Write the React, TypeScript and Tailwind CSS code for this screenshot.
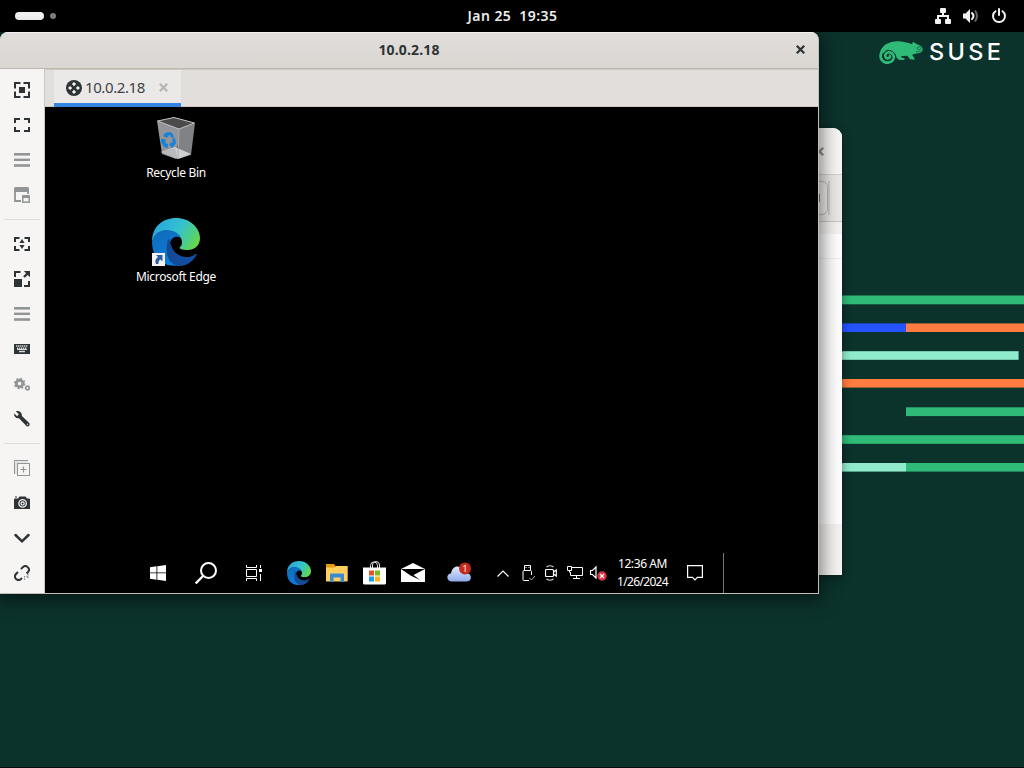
import type { ReactNode } from 'react';

const DARK = '#2e3436';
const GREY = '#929595';

function Icon({ children, c = DARK }: { children: ReactNode; c?: string }) {
  return (
    <div className="flex h-[35px] items-start justify-center pt-[10px]">
      <svg width="16" height="16" viewBox="0 0 16 16" fill="none" stroke={c} strokeWidth="2">
        {children}
      </svg>
    </div>
  );
}

function Divider() {
  return (
    <div className="flex h-[14px] items-center px-1">
      <div className="h-px w-full bg-[#dcdad8]" />
    </div>
  );
}

function Bars() {
  return (
    <g fill={GREY} stroke="none">
      <rect y="1" width="16" height="2.6" />
      <rect y="6.6" width="16" height="2.4" />
      <rect y="12.2" width="16" height="2.6" />
    </g>
  );
}

function Sidebar() {
  return (
    <aside className="flex w-[45px] flex-col border-r border-[#cdc7c2] bg-[#f6f5f4] pt-[3px]">
      <Icon>
        <path d="M1 6.5V1h5.5M9.5 1H15v5.5M15 9.5V15H9.5M6.5 15H1V9.5" />
        <rect x="5" y="5" width="6" height="6" fill={DARK} stroke="none" />
      </Icon>
      <Icon>
        <path d="M1 6V2h5M10 2h5v4M15 10v4h-5M6 14H1v-4" />
      </Icon>
      <Icon><Bars /></Icon>
      <Icon c={GREY}>
        <path d="M1 5v9h6M14 5v2" strokeWidth="1.8" />
        <path d="M0 1.5Q0 0 1.5 0h12Q15 0 15 1.5V5H0Z" fill={GREY} stroke="none" />
        <rect x="8.8" y="8.8" width="6.4" height="6.4" strokeWidth="1.5" fill="#f6f5f4" />
        <path d="M8.5 10h7" />
      </Icon>
      <Divider />
      <Icon>
        <path d="M1 6V2h4.5M10.5 2H15v4M15 10v4h-4.5M5.5 14H1v-4" />
        <path d="M8 3l2.6 4H5.4ZM8 13l2.6-4H5.4Z" fill={DARK} stroke="none" />
      </Icon>
      <Icon>
        <path d="M1 6V1h5.500M15 10v5h-5" />
        <path d="M0 8h8v8H0Z" fill={DARK} stroke="none" />
        <path d="M10 6l4-4" strokeWidth="2.4" />
        <path d="M9.800 0H16v6.200Z" fill={DARK} stroke="none" />
      </Icon>
      <Icon><Bars /></Icon>
      <Icon>
        <rect y="3" width="16" height="10" fill={DARK} stroke="none" />
        <path d="M2 5h12M3 7.2h10" stroke="#d5d7d7" strokeWidth="1.5" strokeDasharray="1.4 .6" />
        <path d="M3 8.5h10" stroke="#d5d7d7" strokeWidth="1" />
        <path d="M5 10.5h6" stroke="#d5d7d7" strokeWidth="1.5" />
      </Icon>
      <Icon c={GREY}>
        <circle cx="5.600" cy="7.500" r="3.300" strokeWidth="2.900" />
        <circle cx="5.600" cy="7.500" r="5" strokeWidth="1.600" strokeDasharray="1.960 1.960" />
        <circle cx="13.500" cy="12" r="1.700" strokeWidth="1.600" />
        <circle cx="13.500" cy="12" r="2.500" strokeWidth=".800" strokeDasharray=".980 .980" />
      </Icon>
      <Icon>
        <path d="M1.8 0.3 4.8 3.3 3.2 5.2 0.3 2.4C-.5 5 1.6 7.8 5 7.2L12.2 14.8c1.7 1.7 4.6-.6 3-2.7L7.9 5C8.3 2 5.5-.9 1.8.3Z" fill={DARK} stroke="none" />
        <circle cx="13.5" cy="13.4" r=".8" fill="#b5b8b8" stroke="none" />
      </Icon>
      <Divider />
      <Icon c={GREY}>
        <path d="M.5 14V.5H14" strokeWidth="1" />
        <path d="M2 14V2H14" strokeWidth="1" stroke="#d2d3d3" />
        <rect x="3.5" y="3.5" width="12" height="12" strokeWidth="1" fill="#f6f5f4" />
        <path d="M9.5 6.5v6M6.5 9.5h6" strokeWidth="1.2" />
      </Icon>
      <Icon>
        <path d="M0 4.5Q0 3.500 1 3.500h3L5.500 1.500h6L13 3.500h2Q16 3.500 16 4.500v9.500H0Z" fill={DARK} stroke="none" />
        <path d="M1 2h2" strokeWidth="1" />
        <circle cx="8.600" cy="8.400" r="3.700" stroke="#f6f5f4" strokeWidth="1.300" />
        <circle cx="8.600" cy="8.400" r="1.600" stroke="#f6f5f4" strokeWidth="1.200" />
      </Icon>
      <Icon>
        <path d="M1.500 5 8 11.300 14.500 5" strokeWidth="2.500" strokeLinecap="round" />
      </Icon>
      <Icon>
        <path d="M7 4.200 8.800 2.200C12-1 17 3.600 14 7L12.600 8.500M4 7 2 9C-1 12.500 3.500 17 7 14l1-1" />
        <path d="M10.500 11v1.500M12.500 11l2 2M13 9.700h2M10.600 13.500v1.500" strokeWidth="1.100" stroke="#85898a" />
      </Icon>
    </aside>
  );
}

function EdgeLogo({ size, id }: { size: number; id: string }) {
  return (
    <svg width={size} height={size} viewBox="0 0 48 48" className="block">
      <defs>
        <linearGradient id={id + 'a'} x1="0" y1=".3" x2="1" y2=".7">
          <stop offset="0" stopColor="#2aa5dd" />
          <stop offset=".5" stopColor="#33c2cf" />
          <stop offset=".8" stopColor="#4fce81" />
          <stop offset="1" stopColor="#69dc3f" />
        </linearGradient>
        <linearGradient id={id + 'b'} x1="0" y1="0" x2=".5" y2="1">
          <stop offset="0" stopColor="#1169b5" />
          <stop offset="1" stopColor="#0b7fdd" />
        </linearGradient>
        <linearGradient id={id + 'c'} x1="0" y1="0" x2="1" y2="0">
          <stop offset="0" stopColor="#104a94" />
          <stop offset="1" stopColor="#164fa6" />
        </linearGradient>
      </defs>
      <path d="M0 24C0 9 10 0 24 0c14 0 24 10 24 20 0 8-6 12-12 12-6 0-9.500-1-8-3 2-2 2-3 2-5 0-6-7-11-16-11C7 13 2 17 0 24Z" fill={`url(#${id}a)`} />
      <path d="M0 24C2 14 10 12 15 12c7 0 13 4 14 8-5-3-10 0-11 5-2 9 1 19 12 22C10 51 0 39 0 24Z" fill={`url(#${id}b)`} />
      <path d="M15 26c0-3 1-5 3-5 0 9 6 18 17 18 5 0 7-2 8.500-3 1-.6 1.500 0 1 1C41 44 33 49 25 48 17 45 13 37 15 26Z" fill={`url(#${id}c)`} />
    </svg>
  );
}

function RecycleBin() {
  return (
    <svg width="38" height="42" viewBox="0 0 38 42" className="block">
      <path d="M0 4 23 12 19 42 5 37Z" fill="#939598" />
      <path d="M22 12 38 6 34 38 21 42Z" fill="#808286" />
      <path d="M4 35 18 30 34 37 21 42Z" fill="#cfd0d1" />
      <path d="M4 35 18 31 21 42Z" fill="#b9babc" />
      <path d="M.5 4 17 .5 37.500 6 22 12Z" fill="#4b4b4b" stroke="#c5c6c7" strokeWidth="1" />
      <path d="M22 12 21 42" stroke="#aaabad" />
      <g fill="#1683d9">
        <path d="M8 16l5-1 3 2 1 4-4-1 1-1-2-1-2 3-4-2Z" />
        <path d="M15 22l3-1 1 5-3 4-2 1v-2l-2-1 2-3v1l2-1Z" />
        <path d="M4 22l4 0 1 3-1 1 3 1v4l-4-1-3-5Z" />
      </g>
    </svg>
  );
}

function DesktopIcon({ label, children }: { label: string; children: ReactNode }) {
  return (
    <div className="flex w-[100px] flex-col items-center">
      {children}
      <span className="whitespace-nowrap text-[12px] leading-[16px] tracking-[-0.32px] text-white">{label}</span>
    </div>
  );
}

function Taskbar() {
  return (
    <footer className="flex h-10 items-center pl-[105px]">
      <svg width="16" height="16" viewBox="0 0 16 16" fill="#fff">
        <path d="M0 2.300 6.500 1.300V7.500H0ZM7.300 1.200 16 0V7.500H7.300ZM0 8.300H6.500V14.700L0 13.700ZM7.300 8.300H16V16L7.300 14.800Z" />
      </svg>
      <svg width="22" height="22" viewBox="0 0 22 22" className="ml-[29px]" fill="none" stroke="#fff" strokeWidth="2">
        <circle cx="13.500" cy="8.500" r="7.500" />
        <path d="M8 14 .700 21.500" strokeWidth="2.300" />
      </svg>
      <svg width="16" height="16" viewBox="0 0 16 16" className="ml-[29px]" fill="none" stroke="#fff" strokeWidth="1">
        <path d="M.500 0v2.500h10V0M.500 16v-2.500h10V16M.500 4.500h10v7H.500ZM14.500 0v3M14.500 9v7" />
        <rect x="13" y="4" width="3" height="3" fill="#fff" stroke="none" />
      </svg>
      <div className="ml-[25px]"><EdgeLogo size={24} id="t" /></div>
      <svg width="22" height="18" viewBox="0 0 22 18" className="ml-[15px]">
        <path d="M0 0h8l1.500 2H21.500V17H0Z" fill="#e39b12" />
        <path d="M0 3.500h9L10.500 2H21.500V17.500H0Z" fill="#ffd05f" />
        <path d="M4 18V10.500q0-1 1-1H17q1 0 1 1V18H14.500v-4.500h-7V18Z" fill="#3b8ad6" />
      </svg>
      <svg width="23" height="24" viewBox="0 0 23 24" className="ml-[15px]">
        <path d="M7.500 7V4.500a3.500 3.500 0 0 1 7 0V7M9.500 7V4a3.500 3.500 0 0 1 7 0V7" fill="none" stroke="#ddd" />
        <path d="M0 6.500H23V22q0 1.500-1.500 1.500h-20Q0 23.500 0 22Z" fill="#fff" />
        <path d="M6 9.500h5v5H6Z" fill="#e5532b" />
        <path d="M12 9.500h5v5h-5Z" fill="#7fb61c" />
        <path d="M6 15.500h5v5H6Z" fill="#159fe6" />
        <path d="M12 15.500h5v5h-5Z" fill="#fbb614" />
      </svg>
      <svg width="24" height="20" viewBox="0 0 24 20" className="ml-[15px]">
        <path d="M0 6 12 0 24 6V19H0Z" fill="#fff" />
        <path d="M0 6H24L12.500 12 19 17 9.500 12.500Z" fill="#000" />
      </svg>
      <svg width="24" height="21" viewBox="0 0 24 21" className="-mt-[2px] ml-[22px]">
        <defs>
          <linearGradient id="cl" x1="0" y1="0" x2="0" y2="1">
            <stop offset="0" stopColor="#e2ebfd" />
            <stop offset="1" stopColor="#8fabea" />
          </linearGradient>
        </defs>
        <path d="M4.500 19.500C-1 19.500-1 11.500 4 11.500 5 4.500 11 2.500 15 6.500c4-1 6 2 6 5 4 1 4 8-1 8Z" fill="url(#cl)" />
        <circle cx="18" cy="6.500" r="6" fill="#c42b1c" />
        <text x="18" y="10" textAnchor="middle" fill="#fff" fontSize="9.500" fontFamily="Open Sans, sans-serif">1</text>
      </svg>
      <svg width="12" height="7" viewBox="0 0 12 7" className="ml-[26px]" fill="none" stroke="#fff" strokeWidth="1.200">
        <path d="M.500 6.500 6 1l5.500 5.500" />
      </svg>
      <svg width="14" height="18" viewBox="0 0 14 18" className="ml-[12px]" fill="none" stroke="#fff">
        <path d="M3.500 6V1.500h6V6M8 16.500H3q-1 0-1-1V7.500q0-1 1-1h6.500q1 0 1 1V11" />
        <path d="M4.500 3.500h1M7.500 3.500h1" />
        <path d="M8.500 14l2 2 4-4.500" stroke="#aaa" />
      </svg>
      <svg width="12" height="18" viewBox="0 0 12 18" className="ml-[10px]" fill="none" stroke="#fff" strokeWidth="1.200">
        <path d="M1.500 5.500h6q1 0 1 1v5q0 1-1 1h-6q-1 0-1-1v-5q0-1 1-1ZM8.500 8 11.300 6v6L8.500 10" />
        <path d="M1.500 3Q5 .500 8.500 3M1.500 15Q5 17.500 8.500 15" stroke="#ccc" />
      </svg>
      <svg width="16" height="14" viewBox="0 0 16 14" className="ml-[10px]" fill="none" stroke="#fff">
        <path d="M5 1.500H15.500v8H3.500V6M9.500 9.500v3M6 12.500h7M.500.500h4v4h-4ZM2.500 4.500v2" />
      </svg>
      <svg width="17" height="16" viewBox="0 0 17 16" className="ml-[7px]" fill="none" stroke="#fff">
        <path d="M.500 5.500h2L6 2v11L2.500 9.500h-2Z" strokeWidth="1.200" />
        <circle cx="12" cy="11" r="4.700" fill="#d8323c" stroke="none" />
        <path d="M10 9l4 4M14 9l-4 4" strokeWidth="1.200" />
      </svg>
      <div className="ml-[9px] flex w-[53px] flex-col items-center whitespace-nowrap text-[12px] leading-[18px] text-white">
        <span className="tracking-[-0.4px]">12:36 AM</span>
        <span className="tracking-[-0.65px]">1/26/2024</span>
      </div>
      <svg width="16" height="16" viewBox="0 0 16 16" className="ml-[18px]" fill="none" stroke="#fff" strokeWidth="1.200">
        <path d="M.600.600h14.800v11.800H10.500L8 15 5.500 12.400H.600Z" />
      </svg>
      <div className="ml-[20px] h-10 w-px bg-[#777]" />
    </footer>
  );
}

function CloseX({ c, s = 8 }: { c: string; s?: number }) {
  return (
    <svg width={s} height={s} viewBox="0 0 8 8" stroke={c} strokeWidth="2" className="block shrink-0">
      <path d="M.700.700l6.600 6.600M7.300.700.700 7.300" />
    </svg>
  );
}

function RemoteWindow() {
  return (
    <section className="absolute left-0 top-[32px] flex h-[562px] w-[819px] flex-col overflow-hidden rounded-t-lg border-b border-r border-[#c5beb8] bg-[#e1dedb] shadow-[0_3px_18px_3px_rgba(0,0,0,0.5)]">
      <header className="flex h-[37px] shrink-0 items-center border-b border-t border-b-[#bfb8b1] border-t-[#f4f3f2] bg-linear-to-b from-[#e1dedb] to-[#dad6d2] pb-[2px]">
        <div className="flex-1 text-center text-[14px] font-bold tracking-[0.15px] text-[#2e3436]">10.0.2.18</div>
        <div className="-ml-[22px] mr-[13px] w-[9px]"><CloseX c={DARK} s={9} /></div>
      </header>
      <div className="flex min-h-0 flex-1">
        <Sidebar />
        <div className="flex min-w-0 flex-1 flex-col">
          <nav className="flex h-[38px] shrink-0 border-b border-t border-[#cdc7c2] pl-[9px]">
            <div className="z-10 -mb-px flex w-[127px] items-center border-b-4 border-[#3584e4] bg-[#ebe9e8] pl-3">
              <svg width="16" height="16" viewBox="0 0 16 16" className="mt-[2px]">
                <circle cx="8" cy="8" r="8" fill={DARK} />
                <g fill="#f2f2f2">
                  <path d="M8 2 10.100 4.100 8 6.200 5.900 4.100ZM8 9.800l2.100 2.100L8 14 5.900 11.900ZM2 8 4.100 5.900 6.200 8 4.100 10.100ZM9.800 8l2.100-2.100L14 8l-2.100 2.100Z" />
                </g>
              </svg>
              <span className="ml-[3px] mt-px w-[60px] whitespace-nowrap text-[15px] leading-5 tracking-[-0.4px] text-[#3d4345]">10.0.2.18</span>
              <div className="ml-[14px] mt-[2px]"><CloseX c="#b4b5b4" s={9} /></div>
            </div>
          </nav>
          <main className="flex flex-1 flex-col justify-between bg-black">
            <div className="ml-[81px] flex w-[100px] flex-col pt-[10px]">
              <DesktopIcon label="Recycle Bin">
                <div className="h-[48px]"><RecycleBin /></div>
              </DesktopIcon>
              <div className="mt-[37px]">
                <DesktopIcon label="Microsoft Edge">
                  <div className="relative h-[51px]">
                    <EdgeLogo size={48} id="d" />
                    <svg width="13" height="13" viewBox="0 0 13 13" className="absolute left-0 top-[35px]">
                      <rect width="13" height="13" fill="#f4f4f4" />
                      <path d="M4 2h6.500v6.500L8.500 6.500Q6 8 6.500 11H4Q2 7 6 4Z" fill="#2c5ca5" />
                    </svg>
                  </div>
                </DesktopIcon>
              </div>
            </div>
            <Taskbar />
          </main>
        </div>
      </div>
    </section>
  );
}

function BackWindow() {
  return (
    <section className="absolute left-[600px] top-[128px] flex h-[447px] w-[242px] flex-col overflow-hidden rounded-t-[9px] bg-[#fdfdfd] shadow-[0_2px_8px_1px_rgba(0,0,0,0.35)]">
      <div className="flex h-[47px] items-center justify-end border-b border-[#d2cfcc] bg-[#f6f5f4] pr-[18px]">
        <CloseX c="#8b8e8f" s={9} />
      </div>
      <div className="flex h-[47px] items-center justify-end border-b border-[#c9c5c1] bg-[#eae8e6] pr-[12px]">
        <div className="flex h-[34px] w-[60px] items-center justify-end rounded-md border border-[#bcb8b4] bg-[#eeedeb] pr-[7px]">
          <div className="h-2 w-[2px] bg-[#777]" />
        </div>
        <div className="h-[34px] w-[2px] bg-[#cfccc9]" />
      </div>
      <div className="h-[12px] bg-[#f3f2f1]" />
      <div className="h-[25px] border-b border-[#eeeeee]" />
      <div className="flex-1" />
      <div className="h-[51px] bg-[#f3f2f0]" />
    </section>
  );
}

function Wallpaper() {
  return (
    <svg width="1024" height="736" viewBox="0 32 1024 736" className="block">
      <g fill="#30ba78">
        <rect x="800" y="295.500" width="224" height="8.800" />
        <rect x="906" y="407.300" width="118" height="8.800" />
        <rect x="800" y="435.200" width="224" height="8.600" />
        <rect x="906" y="463" width="118" height="8.600" />
      </g>
      <rect x="800" y="323.400" width="106" height="8.600" fill="#2453ff" />
      <g fill="#fe7c3f">
        <rect x="906" y="323.400" width="118" height="8.600" />
        <rect x="800" y="379" width="224" height="8.600" />
      </g>
      <g fill="#90ebcd">
        <rect x="800" y="351.200" width="218.600" height="8.600" />
        <rect x="800" y="463" width="106" height="8.600" />
      </g>
      <rect y="767" width="1024" height="1" fill="#05110f" />
      <g transform="translate(860 0) scale(.3333)">
        <path d="M60 166C58 148 72 132 94 126 116 121 138 126 156 133L159 125 171 133C181 136 186 139 188 148 188 153 186 157 180 159 173 161 164 160 157 164 158 171 166 172 163 179L150 178 142 167 122 169 127 174 134 175 133 180 116 179 109 172C107 160 93 150 82 152Z" fill="#30ba78" />
        <path d="M63 160C58 176 69 189 84 188 97 187 104 177 101 167 98 158 87 154 80 159 73 164 75 174 82 175 90 176 92 168 87 166" fill="none" stroke="#30ba78" strokeWidth="8" />
        <path d="M71 160C74 154 79 151 85 151 98 151 108 161 107 174" fill="none" stroke="#0c322c" strokeWidth="2.500" />
        <circle cx="177" cy="145" r="5" fill="none" stroke="#0c322c" strokeWidth="1.600" />
        <path d="M168 155Q176 158 187 152" fill="none" stroke="#0c322c" strokeWidth="1.500" />
      </g>
      <text x="929" y="59.600" fill="#fff" fontSize="23.500" fontWeight="500" letterSpacing="3.300" fontFamily="Inter, sans-serif">SUSE</text>
    </svg>
  );
}

export default function App() {
  return (
    <div className="relative flex h-[768px] w-[1024px] flex-col overflow-hidden bg-[#0c322c] font-['Noto_Sans','Open_Sans',sans-serif]">
      <header className="grid h-[32px] shrink-0 grid-cols-3 items-center bg-black text-[#f2f2f2]">
        <div className="flex items-center gap-[6px] pl-[15px]">
          <div className="h-2 w-[29px] rounded-full bg-[#f2f2f2]" />
          <div className="size-[6px] rounded-full bg-[#808080]" />
        </div>
        <div className="flex items-center justify-center gap-2 pb-[2px] pl-[1px] text-[14px] font-semibold tracking-[0.45px]">
          <span>Jan 25</span>
          <span>19:35</span>
        </div>
        <div className="flex items-center justify-end pr-[17px]">
          <svg width="16" height="16" viewBox="0 0 16 16" fill="#f2f2f2">
            <rect x="5" y="0" width="6" height="5" rx="1" />
            <rect x="0" y="11" width="6" height="5" rx="1" />
            <rect x="10" y="11" width="6" height="5" rx="1" />
            <path d="M7 4h2v3h5v5h-2V9H4v3H2V7h5Z" />
          </svg>
          <svg width="16" height="16" viewBox="0 0 16 16" fill="none" className="ml-[12px]" stroke="#f2f2f2" strokeWidth="2">
            <path d="M0 5.500h2.500L7 1v14L2.500 10.500H0Z" fill="#f2f2f2" stroke="none" />
            <path d="M9 5q3 3 0 6" strokeLinecap="round" />
            <path d="M12 2.500q4 5.500 0 11" stroke="#666" />
          </svg>
          <svg width="16" height="16" viewBox="0 0 16 16" fill="none" className="ml-[12px]" stroke="#f2f2f2" strokeWidth="2" strokeLinecap="round">
            <path d="M8 1v6M4.500 3.200a6 6 0 1 0 7 0" />
          </svg>
        </div>
      </header>
      <Wallpaper />
      <BackWindow />
      <RemoteWindow />
    </div>
  );
}
